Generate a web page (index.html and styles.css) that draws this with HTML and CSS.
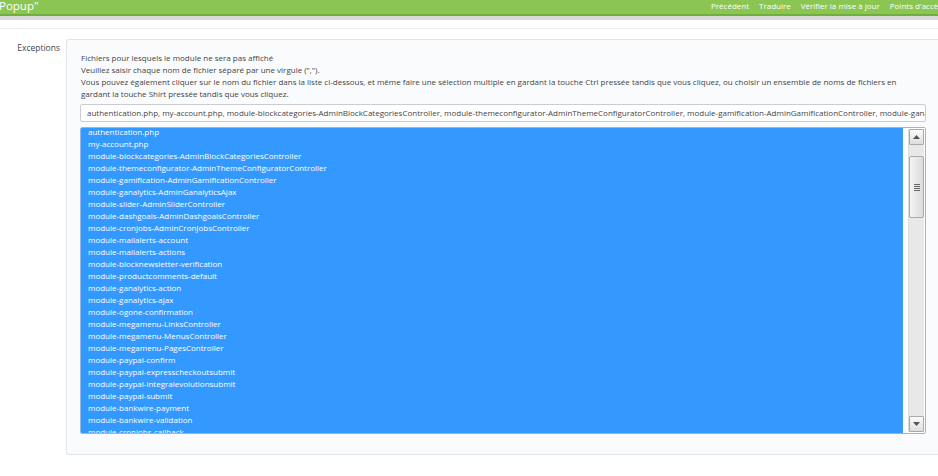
FILE: index.html
```html
<!DOCTYPE html>
<html lang="fr">
<head>
<meta charset="utf-8">
<title>Exceptions</title>
<link rel="stylesheet" href="styles.css">
</head>
<body>
<header class="topbar">
  <div class="title">Popup"</div>
  <nav class="toolbar">
    <span>Précédent</span>
    <span>Traduire</span>
    <span>Vérifier la mise à jour</span>
    <span>Points d'accès rapide</span>
  </nav>
</header>
<div class="subbar"></div>
<main class="page">
  <div class="form-row">
    <label class="row-label">Exceptions</label>
    <div class="panel">
      <p class="help">Fichiers pour lesquels le module ne sera pas affiché<br>Veuillez saisir chaque nom de fichier séparé par une virgule (",").<br>Vous pouvez également cliquer sur le nom du fichier dans la liste ci-dessous, et même faire une sélection multiple en gardant la touche Ctrl pressée tandis que vous cliquez, ou choisir un ensemble de noms de fichiers en gardant la touche Shirt pressée tandis que vous cliquez.</p>
      <div class="text-input">authentication.php, my-account.php, module-blockcategories-AdminBlockCategoriesController, module-themeconfigurator-AdminThemeConfiguratorController, module-gamification-AdminGamificationController, module-ganalytics-AdminGanalyticsAjax</div>
      <div class="listbox">
        <ul class="items">
          <li>authentication.php</li>
          <li>my-account.php</li>
          <li>module-blockcategories-AdminBlockCategoriesController</li>
          <li>module-themeconfigurator-AdminThemeConfiguratorController</li>
          <li>module-gamification-AdminGamificationController</li>
          <li>module-ganalytics-AdminGanalyticsAjax</li>
          <li>module-slider-AdminSliderController</li>
          <li>module-dashgoals-AdminDashgoalsController</li>
          <li>module-cronjobs-AdminCronJobsController</li>
          <li>module-mailalerts-account</li>
          <li>module-mailalerts-actions</li>
          <li>module-blocknewsletter-verification</li>
          <li>module-productcomments-default</li>
          <li>module-ganalytics-action</li>
          <li>module-ganalytics-ajax</li>
          <li>module-ogone-confirmation</li>
          <li>module-megamenu-LinksController</li>
          <li>module-megamenu-MenusController</li>
          <li>module-megamenu-PagesController</li>
          <li>module-paypal-confirm</li>
          <li>module-paypal-expresscheckoutsubmit</li>
          <li>module-paypal-integralevolutionsubmit</li>
          <li>module-paypal-submit</li>
          <li>module-bankwire-payment</li>
          <li>module-bankwire-validation</li>
          <li>module-cronjobs-callback</li>
          <li>module-cronjobs-AdminCronJobs</li>
        </ul>
        <div class="scrollbar">
          <div class="sb-btn sb-up"><svg width="7" height="4" viewBox="0 0 7 4"><path d="M0 4 L3.5 0 L7 4 Z" fill="#555"/></svg></div>
          <div class="sb-track">
            <div class="sb-thumb"><span></span><span></span><span></span><span></span></div>
          </div>
          <div class="sb-btn sb-down"><svg width="7" height="4" viewBox="0 0 7 4"><path d="M0 0 L7 0 L3.5 4 Z" fill="#555"/></svg></div>
        </div>
      </div>
    </div>
  </div>
</main>
</body>
</html>
```
FILE: styles.css
```css
* { box-sizing: border-box; }
html, body { margin: 0; padding: 0; }
body {
  width: 938px;
  height: 476px;
  overflow: hidden;
  background: #ffffff;
  font-family: "Open Sans", "Liberation Sans", sans-serif;
  color: #444;
}
.topbar {
  height: 16px;
  background: #8bc652;
  border-bottom: 2px solid #6faf3d;
  display: grid;
  grid-template-columns: 711px auto;
  white-space: nowrap;
  overflow: hidden;
  color: #fff;
}
.title {
  font-size: 11.5px;
  line-height: 13px;
  margin-left: -1px;
  margin-top: -1px;
}
.toolbar {
  display: flex;
  gap: 10px;
  font-size: 8px;
  line-height: 11px;
}
.subbar {
  height: 4px;
  background: #dadada;
}
.page {
  border-top: 1px solid #edf0f3;
  margin-top: 8px;
  padding-top: 10px;
}
.form-row {
  display: flex;
  align-items: flex-start;
}
.row-label {
  width: 66px;
  flex-shrink: 0;
  text-align: right;
  padding-right: 6px;
  font-size: 8.5px;
  line-height: 12px;
  margin-top: 3px;
  color: #444;
}
.panel {
  flex: 1;
  min-width: 0;
  background: #fafbfc;
  border: 1px solid #e2e6eb;
  border-right: none;
  border-radius: 3px 0 0 3px;
  padding: 12px 12px 19px 13px;
  height: 416px;
}
.help {
  margin: 0 0 4px 1px;
  font-size: 8px;
  line-height: 12px;
  color: #444;
}
.text-input {
  height: 18px;
  background: #fff;
  border: 1px solid #c9cdd2;
  border-radius: 2px;
  padding: 0 6px;
  font-size: 8px;
  line-height: 16px;
  white-space: nowrap;
  overflow: hidden;
  color: #444;
}
.listbox {
  margin-top: 5px;
  height: 307px;
  display: flex;
  background: #fff;
  border: 1px solid #8fb8e6;
  border-radius: 2px;
  overflow: hidden;
}
.items {
  flex: 1;
  min-width: 0;
  margin: 0;
  padding: 0 0 0 7px;
  list-style: none;
  background: #3399ff;
  color: #fff;
  font-size: 8px;
  line-height: 12px;
  overflow: hidden;
}
.items li { white-space: nowrap; }
.items li:first-child { margin-top: -2px; }
.scrollbar {
  width: 16px;
  flex-shrink: 0;
  margin: 1px 1px 1px 5px;
  display: flex;
  flex-direction: column;
  background: #ececec;
  border-left: 1px solid #dcdcdc;
}
.sb-btn {
  height: 16px;
  flex-shrink: 0;
  display: flex;
  align-items: center;
  justify-content: center;
  background: linear-gradient(#fbfbfb, #dedede);
  border: 1px solid #a9a9a9;
  border-radius: 1px;
}
.sb-track {
  flex: 1;
  padding-top: 11px;
  background: #e8e8e8;
}
.sb-thumb {
  height: 62px;
  background: linear-gradient(90deg, #f4f4f4, #dcdcdc);
  border: 1px solid #a9a9a9;
  border-radius: 2px;
  display: flex;
  flex-direction: column;
  align-items: center;
  justify-content: center;
  gap: 1px;
}
.sb-thumb span {
  display: block;
  width: 6px;
  height: 1px;
  background: #666;
}
```
